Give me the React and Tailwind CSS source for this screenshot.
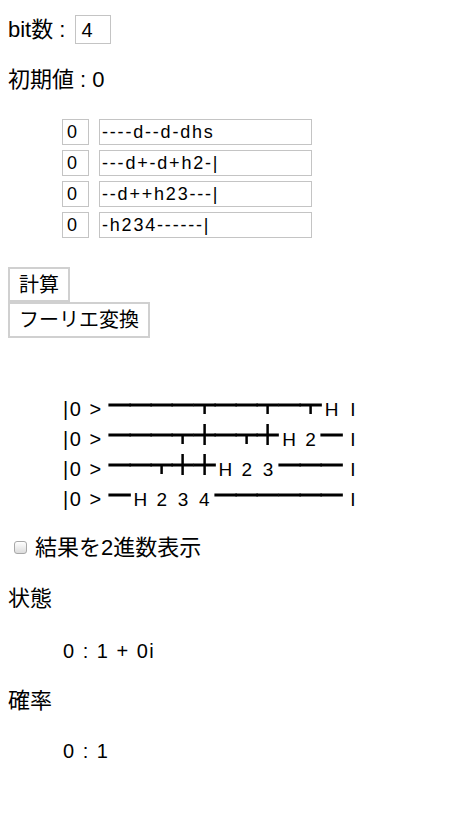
import { useState } from 'react';

const FONT = { fontFamily: '"Liberation Sans", "Noto Sans CJK JP", sans-serif' };

const gates = ['----d--d-dhs', '---d+-d+h2-|', '--d++h23---|', '-h234------|'];

function Wire({ kind }) {
  return (
    <svg width="21.25" height="30" className="block shrink-0 overflow-visible">
      <line x1="-0.6" y1="12" x2="21.85" y2="12" stroke="#000" strokeWidth="3" />
      {kind === 'd' && <line x1="10.6" y1="12" x2="10.6" y2="21" stroke="#000" strokeWidth="2.5" />}
      {kind === '+' && <line x1="10.6" y1="1" x2="10.6" y2="22" stroke="#000" strokeWidth="2.5" />}
    </svg>
  );
}

function Cell({ ch }) {
  if (ch === '-' || ch === 'd' || ch === '+') return <Wire kind={ch} />;
  const label = ch === 'h' ? 'H' : ch === '|' || ch === 's' ? 'I' : ch;
  return (
    <span className="w-[21.25px] shrink-0 text-center text-[19px] leading-[30px] pt-[2px] block">{label}</span>
  );
}

function CircuitRow({ text }) {
  return (
    <div className="flex h-[30px] ml-[55px]">
      <span className="w-[45.6px] shrink-0 text-[20px] leading-[30px] pt-[1px] tracking-[1.5px] block">|0 &gt;</span>
      {text.split('').map((ch, i) => (
        <Cell key={i} ch={ch} />
      ))}
    </div>
  );
}

export default function App() {
  const [binary, setBinary] = useState(false);

  return (
    <div className="bg-white text-black px-2 min-h-[816px]" style={FONT}>
      <div className="flex items-center h-[29px] pt-[15px] box-content text-[22px]">
        <span>bit数 :</span>
        <input
          className="ml-[10px] w-[36px] h-[29px] border border-[#c4c4c4] px-[5px] text-[20px] outline-none"
          defaultValue="4"
        />
      </div>

      <div className="mt-[21px] text-[22px] leading-[30px]">初期値 : 0</div>

      <div className="ml-[54px] mt-[24px] flex flex-col gap-[5px]">
        {gates.map((g, i) => (
          <div key={i} className="flex gap-[10px]">
            <input
              className="w-[27px] h-[26px] border border-[#c4c4c4] px-[4px] text-[18px] outline-none"
              defaultValue="0"
            />
            <input
              className="w-[213px] h-[26px] border border-[#c4c4c4] px-[2px] text-[18px] tracking-[1.8px] outline-none"
              defaultValue={g}
            />
          </div>
        ))}
      </div>

      <div className="mt-[29px] flex flex-col items-start">
        <button className="h-[35px] px-[9px] border-2 border-[#d0d0d0] bg-white text-[20px] leading-none">計算</button>
        <button className="h-[36px] px-[9px] border-2 border-[#d0d0d0] bg-white text-[20px] leading-none">フーリエ変換</button>
      </div>

      <div className="mt-[55px]">
        {gates.map((g, i) => (
          <CircuitRow key={i} text={g} />
        ))}
      </div>

      <label className="mt-[19px] flex items-center h-[30px] text-[22px]">
        <input
          type="checkbox"
          checked={binary}
          onChange={(e) => setBinary(e.target.checked)}
          className="appearance-none ml-[6px] mr-[8px] w-[13px] h-[13px] rounded-[3px] border border-[#a8a8a8] bg-gradient-to-b from-white to-[#dcdcdc]"
        />
        <span>結果を2進数表示</span>
      </label>

      <div className="mt-[22px] text-[22px] leading-[30px]">状態</div>
      <div className="mt-[22px] ml-[55px] text-[20px] leading-[30px] tracking-[1.5px]">0 : 1 + 0i</div>
      <div className="mt-[20px] text-[22px] leading-[30px]">確率</div>
      <div className="mt-[20px] ml-[55px] text-[20px] leading-[30px] tracking-[1.5px]">0 : 1</div>
    </div>
  );
}
